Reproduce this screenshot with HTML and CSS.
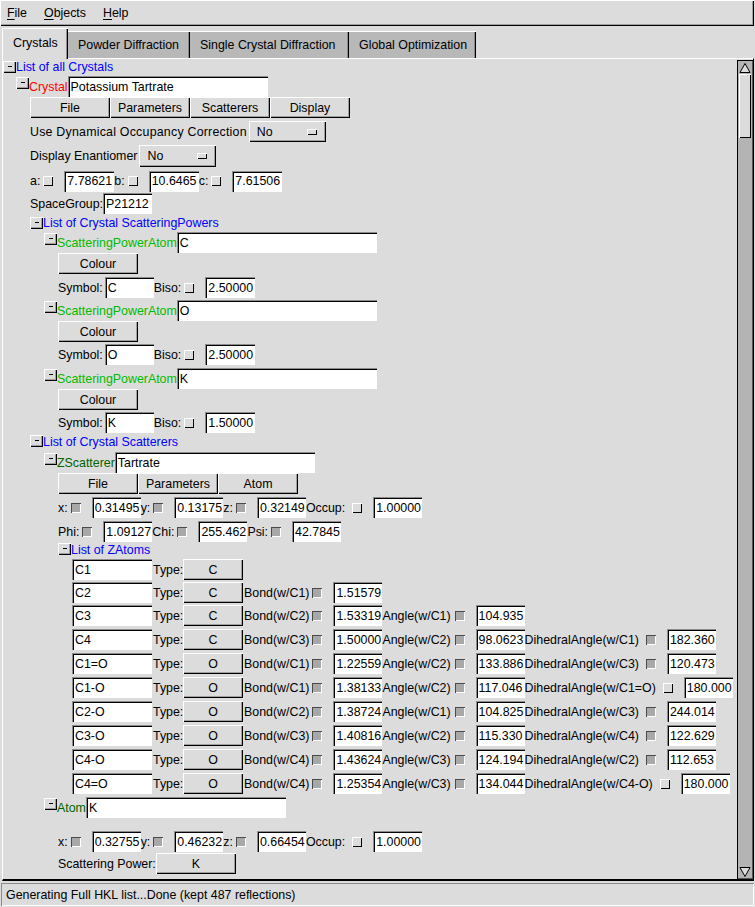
FILE: index.html
```html
<!DOCTYPE html>
<html>
<head>
<meta charset="utf-8">
<title>Fox - Crystals</title>
<link rel="stylesheet" href="styles.css">
</head>
<body>
<div class="app">
  <div class="menubar">
    <span class="menu"><u>F</u>ile</span>
    <span class="menu"><u>O</u>bjects</span>
    <span class="menu"><u>H</u>elp</span>
  </div>
  <div class="tabs">
    <div class="tab active t1">Crystals</div>
    <div class="tab t2">Powder Diffraction</div>
    <div class="tab t3">Single Crystal Diffraction</div>
    <div class="tab t4">Global Optimization</div>
  </div>
  <div class="panel">
    <div class="view">
      <div class="row hd m2"><span class="tg"></span><span class="blue">List of all Crystals</span></div>
      <div class="kids first">
        <div class="row m3"><span class="tg"></span><span class="red">Crystal</span><span class="ent wl">Potassium Tartrate</span></div>
        <div class="kids">
          <div class="row"><span class="btn">File</span><span class="btn">Parameters</span><span class="btn">Scatterers</span><span class="btn">Display</span></div>
          <div class="row m3"><span class="wide">Use Dynamical Occupancy Correction</span><span class="opt">No<i class="ind"></i></span></div>
          <div class="row h22 m3"><span>Display Enantiomer</span><span class="opt">No<i class="ind"></i></span></div>
          <div class="row h22 m3"><span>a:</span><i class="cb"></i><span class="ent w50">7.78621</span><span>b:</span><i class="cb"></i><span class="ent w50">10.6465</span><span>c:</span><i class="cb"></i><span class="ent w50">7.61506</span></div>
          <div class="row m1"><span>SpaceGroup:</span><span class="ent">P21212</span></div>

          <div class="row hd m3"><span class="tg"></span><span class="blue">List of Crystal ScatteringPowers</span></div>
          <div class="kids">
            <div class="row m3"><span class="tg"></span><span class="green">ScatteringPowerAtom</span><span class="ent wl">C</span></div>
            <div class="kids">
              <div class="row"><span class="btn">Colour</span></div>
              <div class="row m3"><span>Symbol:</span><span class="ent sym">C</span><span>Biso:</span><i class="cb"></i><span class="ent w50">2.50000</span></div>
            </div>
            <div class="row m2"><span class="tg"></span><span class="green">ScatteringPowerAtom</span><span class="ent wl">O</span></div>
            <div class="kids">
              <div class="row"><span class="btn">Colour</span></div>
              <div class="row m2"><span>Symbol:</span><span class="ent sym">O</span><span>Biso:</span><i class="cb"></i><span class="ent w50">2.50000</span></div>
            </div>
            <div class="row m3"><span class="tg"></span><span class="green">ScatteringPowerAtom</span><span class="ent wl">K</span></div>
            <div class="kids">
              <div class="row"><span class="btn">Colour</span></div>
              <div class="row m2"><span>Symbol:</span><span class="ent sym">K</span><span>Biso:</span><i class="cb"></i><span class="ent w50">1.50000</span></div>
            </div>
          </div>

          <div class="row hd13 m2"><span class="tg"></span><span class="blue">List of Crystal Scatterers</span></div>
          <div class="kids">
            <div class="row m4"><span class="tg"></span><span class="dgreen">ZScatterer</span><span class="ent wl">Tartrate</span></div>
            <div class="kids">
              <div class="row"><span class="btn">File</span><span class="btn">Parameters</span><span class="btn">Atom</span></div>
              <div class="row m3"><span>x:</span><i class="cb on"></i><span class="ent">0.31495</span><span>y:</span><i class="cb on"></i><span class="ent">0.13175</span><span>z:</span><i class="cb on"></i><span class="ent">0.32149</span><span>Occup:</span><i class="cb occ"></i><span class="ent">1.00000</span></div>
              <div class="row m3"><span>Phi:</span><i class="cb on"></i><span class="ent">1.09127</span><span>Chi:</span><i class="cb on"></i><span class="ent">255.462</span><span>Psi:</span><i class="cb on"></i><span class="ent">42.7845</span></div>
              <div class="row hd13 m1"><span class="tg"></span><span class="blue">List of ZAtoms</span></div>
              <div class="kids">
                <div class="row m3"><span class="ent wn">C1</span><span class="lt">Type:</span><span class="btn wt">C</span></div>
                <div class="row m2"><span class="ent wn">C2</span><span class="lt">Type:</span><span class="btn wt">C</span><span class="lb">Bond(w/C1)</span><i class="cb on"></i><span class="ent">1.51579</span></div>
                <div class="row m2"><span class="ent wn">C3</span><span class="lt">Type:</span><span class="btn wt">C</span><span class="lb">Bond(w/C2)</span><i class="cb on"></i><span class="ent">1.53319</span><span>Angle(w/C1)</span><i class="cb on ang"></i><span class="ent">104.935</span></div>
                <div class="row m3"><span class="ent wn">C4</span><span class="lt">Type:</span><span class="btn wt">C</span><span class="lb">Bond(w/C3)</span><i class="cb on"></i><span class="ent">1.50000</span><span>Angle(w/C2)</span><i class="cb on ang"></i><span class="ent">98.0623</span><span>DihedralAngle(w/C1)</span><i class="cb on dh"></i><span class="ent">182.360</span></div>
                <div class="row m3"><span class="ent wn">C1=O</span><span class="lt">Type:</span><span class="btn wt">O</span><span class="lb">Bond(w/C1)</span><i class="cb on"></i><span class="ent">1.22559</span><span>Angle(w/C2)</span><i class="cb on ang"></i><span class="ent">133.886</span><span>DihedralAngle(w/C3)</span><i class="cb on dh"></i><span class="ent">120.473</span></div>
                <div class="row m3"><span class="ent wn">C1-O</span><span class="lt">Type:</span><span class="btn wt">O</span><span class="lb">Bond(w/C1)</span><i class="cb on"></i><span class="ent">1.38133</span><span>Angle(w/C2)</span><i class="cb on ang"></i><span class="ent">117.046</span><span>DihedralAngle(w/C1=O)</span><i class="cb dh"></i><span class="ent">180.000</span></div>
                <div class="row m3"><span class="ent wn">C2-O</span><span class="lt">Type:</span><span class="btn wt">O</span><span class="lb">Bond(w/C2)</span><i class="cb on"></i><span class="ent">1.38724</span><span>Angle(w/C1)</span><i class="cb on ang"></i><span class="ent">104.825</span><span>DihedralAngle(w/C3)</span><i class="cb on dh"></i><span class="ent">244.014</span></div>
                <div class="row m3"><span class="ent wn">C3-O</span><span class="lt">Type:</span><span class="btn wt">O</span><span class="lb">Bond(w/C3)</span><i class="cb on"></i><span class="ent">1.40816</span><span>Angle(w/C2)</span><i class="cb on ang"></i><span class="ent">115.330</span><span>DihedralAngle(w/C4)</span><i class="cb on dh"></i><span class="ent">122.629</span></div>
                <div class="row m3"><span class="ent wn">C4-O</span><span class="lt">Type:</span><span class="btn wt">O</span><span class="lb">Bond(w/C4)</span><i class="cb on"></i><span class="ent">1.43624</span><span>Angle(w/C3)</span><i class="cb on ang"></i><span class="ent">124.194</span><span>DihedralAngle(w/C2)</span><i class="cb on dh"></i><span class="ent">112.653</span></div>
                <div class="row m3"><span class="ent wn">C4=O</span><span class="lt">Type:</span><span class="btn wt">O</span><span class="lb">Bond(w/C4)</span><i class="cb on"></i><span class="ent">1.25354</span><span>Angle(w/C3)</span><i class="cb on ang"></i><span class="ent">134.044</span><span>DihedralAngle(w/C4-O)</span><i class="cb dh"></i><span class="ent">180.000</span></div>
              </div>
            </div>
            <div class="row m3"><span class="tg"></span><span class="dgreen">Atom</span><span class="ent wl">K</span></div>
            <div class="kids">
              <div class="row m13"><span>x:</span><i class="cb on"></i><span class="ent">0.32755</span><span>y:</span><i class="cb on"></i><span class="ent">0.46232</span><span>z:</span><i class="cb on"></i><span class="ent">0.66454</span><span>Occup:</span><i class="cb occ"></i><span class="ent">1.00000</span></div>
              <div class="row m1"><span>Scattering Power:</span><span class="btn">K</span></div>
            </div>
          </div>
        </div>
      </div>
    </div>
    <div class="vscroll">
      <div class="arrow"><svg width="12" height="12" viewBox="0 0 12 12"><polygon points="6,1.5 11,10.5 1,10.5" fill="#dcdcdc" stroke="#000" stroke-width="1"/></svg></div>
      <div class="thumb"></div>
      <div class="trough"></div>
      <div class="arrow"><svg width="12" height="12" viewBox="0 0 12 12"><polygon points="1,1.5 11,1.5 6,10.5" fill="#dcdcdc" stroke="#000" stroke-width="1"/></svg></div>
    </div>
  </div>
  <div class="status">Generating Full HKL list...Done (kept 487 reflections)</div>
</div>
</body>
</html>
```

FILE: styles.css
```css
* { box-sizing: border-box; }
html, body { margin: 0; padding: 0; }
body {
  background: #dcdcdc;
  font-family: "Liberation Sans", Arial, sans-serif;
  font-size: 12.4px;
  color: #000;
}
.app {
  width: 755px;
  height: 907px;
  display: flex;
  flex-direction: column;
  overflow: hidden;
}

/* menu bar */
.menubar {
  height: 26px;
  width: 754px;
  display: flex;
  align-items: center;
  gap: 17px;
  padding-left: 7px;
  box-shadow: inset 1px 1px #fff, inset -1px -1px #000, inset -2px -2px #a0a0a0;
}
.menu u { text-decoration: underline; text-underline-offset: 2px; }

/* tabs */
.tabs {
  height: 32px;
  display: flex;
  align-items: flex-end;
  padding-left: 2px;
}
.tab {
  height: 27px;
  display: flex;
  align-items: center;
  padding-left: 10px;
  background: #b8b8b8;
  box-shadow: inset 0 1px #fff, inset -1px 0 #000, inset -2px 0 #8a8a8a;
  margin-bottom: 0;
}
.tab.active {
  height: 31px;
  background: #dcdcdc;
  padding-left: 11px;
  padding-bottom: 2px;
  margin-bottom: -1px;
  position: relative;
  z-index: 1;
  box-shadow: inset 1px 1px #fff, inset -1px 0 #000, inset -2px 0 #8a8a8a;
}
.t1 { width: 66px; }
.t2 { width: 122px; }
.t3 { width: 159px; }
.t4 { width: 127px; }

/* notebook page */
.panel {
  margin-left: 2px;
  width: 752px;
  height: 823px;
  display: flex;
  border-top: 1px solid #fff;
  border-left: 1px solid #fff;
  border-right: 1px solid #000;
  border-bottom: 2px solid #000;
}
.view {
  flex: 1;
  overflow: hidden;
}
.kids { padding-left: 14px; }
.kids.first { padding-left: 13px; }

.row {
  display: flex;
  align-items: center;
  height: 21px;
  white-space: nowrap;
}
.row.h22 { height: 22px; }
.row.hd { height: 12px; }
.row.hd13 { height: 13px; }
.m1 { margin-top: 1px; }
.m2 { margin-top: 2px; }
.m3 { margin-top: 3px; }
.m4 { margin-top: 4px; }
.m13 { margin-top: 13px; }

.blue { color: #0000ff; }
.red { color: #ff0000; }
.green { color: #00bb00; }
.dgreen { color: #006400; }
.wide { letter-spacing: 0.22px; }

/* expander toggle */
.tg {
  align-self: flex-start;
  flex: none;
  width: 13px;
  height: 12px;
  margin-top: 1px;
  background: #dcdcdc;
  box-shadow: inset 1px 1px #fff, inset -1px -1px #000, inset -2px -2px #a0a0a0;
}
.row.hd .tg, .row.hd13 .tg { margin-top: 0; }
.tg::after {
  content: "";
  display: block;
  width: 4px;
  height: 1px;
  background: #000;
  margin: 5px 0 0 5px;
}

/* entry */
.ent {
  flex: none;
  width: 49px;
  height: 21px;
  background: #fff;
  display: flex;
  align-items: center;
  padding-left: 3px;
  overflow: hidden;
  box-shadow: inset 1px 1px #8c8c8c, inset 2px 2px #000;
}
.ent.w50 { width: 50px; }
.ent.wl { width: 200px; }
.ent.sym { margin-left: 2px; }
.ent.wn { width: 80px; }

/* push button */
.btn {
  flex: none;
  width: 80px;
  height: 21px;
  display: flex;
  align-items: center;
  justify-content: center;
  background: #dcdcdc;
  box-shadow: inset 1px 1px #fff, inset -1px -1px #000, inset -2px -2px #a0a0a0;
}
.btn.wt { width: 60px; }
.lt { width: 30px; margin-left: 1px; }
.lb { margin-left: 1px; }

/* option menu */
.opt {
  flex: none;
  width: 77px;
  height: 100%;
  margin-left: 2px;
  display: flex;
  align-items: center;
  justify-content: space-between;
  padding: 0 9px 0 8px;
  background: #dcdcdc;
  box-shadow: inset 1px 1px #fff, inset -1px -1px #000, inset -2px -2px #a0a0a0;
}
.ind {
  width: 10px;
  height: 6px;
  background: #dcdcdc;
  box-shadow: inset 1px 1px #fff, inset -1px -1px #000;
}

/* check button indicator */
.cb {
  flex: none;
  width: 10px;
  height: 10px;
  margin: 0 11px 0 3px;
  background: #dcdcdc;
  box-shadow: inset 1px 1px #fff, inset -1px -1px #000;
}
.cb.on {
  background: #a8a8a8;
  box-shadow: inset 1px 1px #4a4a4a, inset -1px -1px #fff;
}
.cb.occ { margin-left: 7px; }
.cb.ang { margin-left: 4px; }
.cb.dh { margin-left: 7px; }

/* scrollbar */
.vscroll {
  flex: none;
  width: 16px;
  margin-top: 1px;
  display: flex;
  flex-direction: column;
  background: #b4b4b4;
  padding: 2px 2px 1px 2px;
  box-shadow: inset 1px 1px #000, inset -1px -1px #555;
}
.arrow {
  height: 12px;
  flex: none;
  display: flex;
}
.arrow svg { display: block; }
.thumb {
  height: 64px;
  flex: none;
  background: #dcdcdc;
  box-shadow: inset 1px 1px #fff, inset -1px -1px #000;
}
.trough { flex: 1; }

/* status bar */
.status {
  margin-top: 2px;
  margin-left: 1px;
  width: 753px;
  height: 23px;
  display: flex;
  align-items: center;
  padding-left: 5px;
  box-shadow: inset 1px 1px #8c8c8c, inset -1px -1px #fff;
}
```
